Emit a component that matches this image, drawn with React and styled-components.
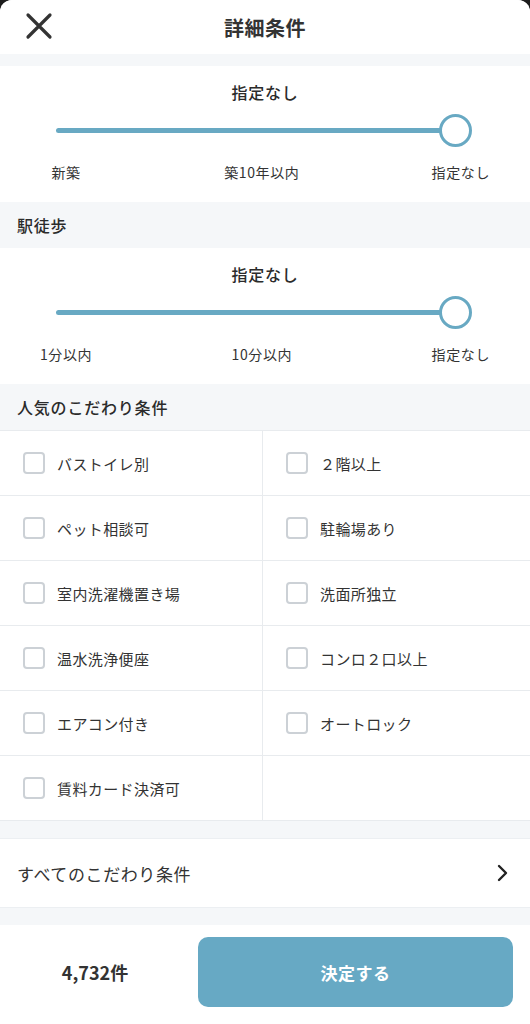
import styled, { createGlobalStyle } from "styled-components";

const GlobalStyle = createGlobalStyle`
  * { box-sizing: border-box; }
  body {
    margin: 0;
    background: #1c1c1c;
    font-family: "Noto Sans CJK JP", "Noto Sans", sans-serif;
    color: #333;
  }
`;

const ages = ["新築", "築10年以内", "指定なし"];
const walks = ["1分以内", "10分以内", "指定なし"];
const options = [
  "バストイレ別",
  "２階以上",
  "ペット相談可",
  "駐輪場あり",
  "室内洗濯機置き場",
  "洗面所独立",
  "温水洗浄便座",
  "コンロ２口以上",
  "エアコン付き",
  "オートロック",
  "賃料カード決済可",
  null,
];

const RangeSlider = ({ labels }) => (
  <SliderBlock>
    <SliderValue>指定なし</SliderValue>
    <Track>
      <Thumb />
    </Track>
    <Labels>
      {labels.map((l) => (
        <span key={l}>{l}</span>
      ))}
    </Labels>
  </SliderBlock>
);

const App = () => {
  return (
    <Sheet>
      <GlobalStyle />
      <Header>
        <CloseButton aria-label="close">
          <svg width="28" height="28" viewBox="0 0 28 28">
            <path
              d="M3 3 L25 25 M25 3 L3 25"
              stroke="#333"
              strokeWidth="3.2"
              strokeLinecap="round"
            />
          </svg>
        </CloseButton>
        <Title>詳細条件</Title>
      </Header>
      <Gap $h={12} />
      <RangeSlider labels={ages} />
      <SectionTitle>駅徒歩</SectionTitle>
      <RangeSlider labels={walks} />
      <SectionTitle>人気のこだわり条件</SectionTitle>
      <Grid>
        {options.map((o, i) => (
          <Cell key={i}>
            {o && (
              <>
                <Box />
                <span>{o}</span>
              </>
            )}
          </Cell>
        ))}
      </Grid>
      <Gap $h={17} />
      <LinkRow>
        <span>すべてのこだわり条件</span>
        <svg width="14" height="20" viewBox="0 0 14 20">
          <path
            d="M3 3 L10 10 L3 17"
            fill="none"
            stroke="#222"
            strokeWidth="2.4"
            strokeLinecap="round"
            strokeLinejoin="round"
          />
        </svg>
      </LinkRow>
      <Gap $h={17} />
      <Footer>
        <Count>4,732件</Count>
        <Submit>決定する</Submit>
      </Footer>
    </Sheet>
  );
};
export default App;

const Sheet = styled.div`
  width: 530px;
  height: 1024px;
  background: #f5f7f9;
  border-radius: 12px 12px 0 0;
  overflow: hidden;
  display: flex;
  flex-direction: column;
`;

const Header = styled.header`
  height: 54px;
  background: #fff;
  display: flex;
  align-items: center;
  justify-content: center;
  position: relative;
`;

const CloseButton = styled.button`
  position: absolute;
  left: 24px;
  top: 11px;
  width: 30px;
  height: 30px;
  border: none;
  background: none;
  padding: 1px;
  display: flex;
  cursor: pointer;
`;

const Title = styled.h1`
  margin: 0;
  font-size: 20px;
  font-weight: 700;
  color: #333;
  letter-spacing: 0.5px;
`;

const Gap = styled.div`
  height: ${({ $h }) => $h}px;
  flex-shrink: 0;
`;

const SliderBlock = styled.section`
  height: 136px;
  flex-shrink: 0;
  background: #fff;
  padding-top: 14px;
  display: flex;
  flex-direction: column;
  align-items: center;
`;

const SliderValue = styled.div`
  font-size: 16px;
  font-weight: 500;
  color: #2b2b2b;
  line-height: 24px;
  letter-spacing: 0.8px;
`;

const Track = styled.div`
  position: relative;
  width: 400px;
  height: 5px;
  margin-top: 24px;
  margin-left: 56px;
  border-radius: 3px;
  background: #68a9c3;
  align-self: flex-start;
`;

const Thumb = styled.div`
  position: absolute;
  right: -16px;
  top: -14px;
  width: 33px;
  height: 33px;
  border-radius: 50%;
  border: 3.5px solid #68a9c3;
  background: #fff;
`;

const Labels = styled.div`
  width: 100%;
  margin-top: 30px;
  padding: 0 40px;
  display: flex;
  justify-content: space-between;
  font-size: 14px;
  color: #333;
  line-height: 18px;
  letter-spacing: 0.6px;

  span:first-child {
    min-width: 52px;
    text-align: center;
  }
`;

const SectionTitle = styled.h2`
  margin: 0;
  height: 46px;
  flex-shrink: 0;
  padding-left: 17px;
  display: flex;
  align-items: center;
  font-size: 16px;
  font-weight: 500;
  color: #2b2b2b;
  letter-spacing: 0.8px;
  background: #f5f7f9;
`;

const Grid = styled.div`
  display: grid;
  grid-template-columns: 263px 1fr;
  background: #fff;
  border-top: 1px solid #e8ebee;
`;

const Cell = styled.label`
  height: 65px;
  display: flex;
  align-items: center;
  gap: 12px;
  padding-left: 23px;
  font-size: 15px;
  color: #333;
  border-bottom: 1px solid #e8ebee;
  letter-spacing: 0.4px;

  &:nth-child(odd) {
    border-right: 1px solid #e8ebee;
  }
`;

const Box = styled.span`
  width: 22px;
  height: 22px;
  flex-shrink: 0;
  border: 2px solid #ccd1d6;
  border-radius: 4px;
  background: #fff;
`;

const LinkRow = styled.div`
  height: 70px;
  flex-shrink: 0;
  background: #fff;
  display: flex;
  align-items: center;
  justify-content: space-between;
  padding: 0 20px 0 17px;
  font-size: 17px;
  color: #333;
  letter-spacing: 0.6px;
  border-top: 1px solid #eceff2;
  border-bottom: 1px solid #eceff2;
`;

const Footer = styled.footer`
  flex: 1;
  background: #fff;
  display: flex;
  align-items: flex-start;
  padding: 12px 17px 0 0;
`;

const Count = styled.div`
  width: 198px;
  height: 70px;
  display: flex;
  align-items: center;
  justify-content: center;
  font-size: 18px;
  font-weight: 700;
  color: #333;
  padding-right: 8px;
`;

const Submit = styled.button`
  flex: 1;
  height: 70px;
  border: none;
  border-radius: 10px;
  background: #67a9c4;
  color: #fff;
  font-family: inherit;
  font-size: 17px;
  font-weight: 700;
  letter-spacing: 0.5px;
  cursor: pointer;
`;
